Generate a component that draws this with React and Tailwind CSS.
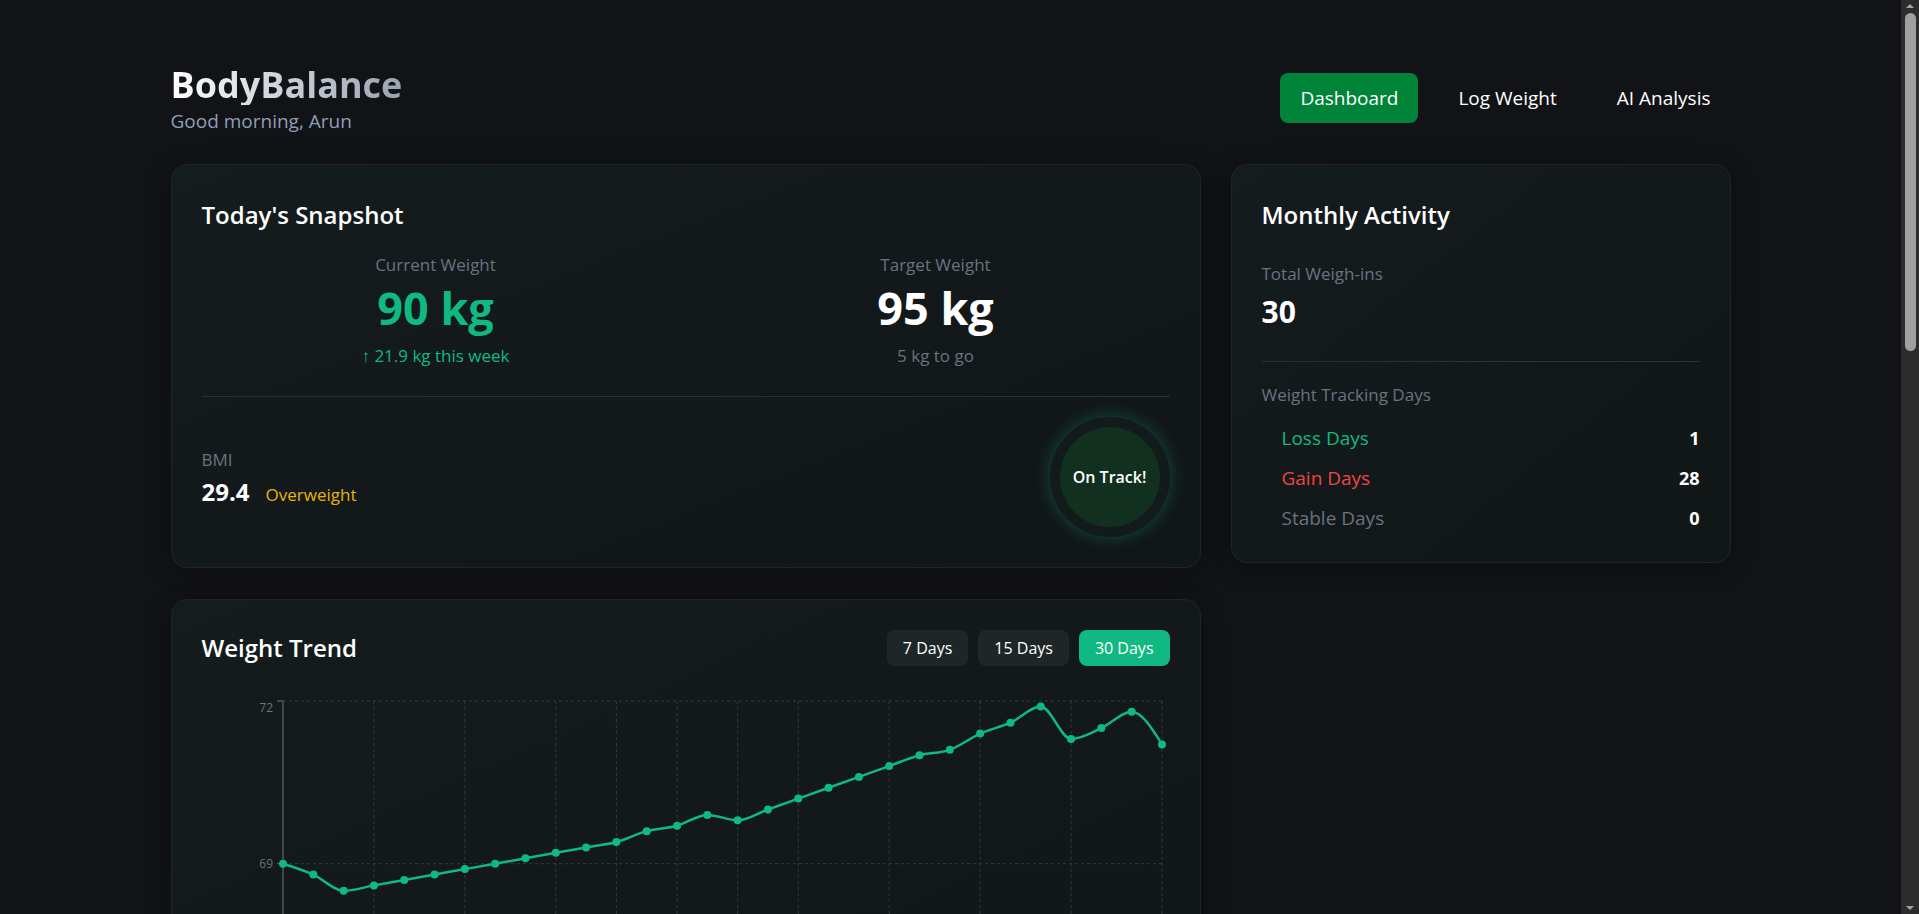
const weights = [
  69.0, 68.8, 68.5, 68.6, 68.7, 68.8, 68.9, 69.0, 69.1, 69.2,
  69.3, 69.4, 69.6, 69.7, 69.9, 69.8, 70.0, 70.2, 70.4, 70.6,
  70.8, 71.0, 71.1, 71.4, 71.6, 71.9, 71.3, 71.5, 71.8, 71.2,
];

const CHART_W = 967;
const CHART_H = 360;
const AXIS_X = 81;
const LAST_X = 960;
const TOP_Y = 15;
const PX_PER_KG = 54.23;
const gridIdx = [3, 6, 9, 11, 13, 15, 17, 20, 23, 26, 29];

const xAt = (i) => AXIS_X + (i * (LAST_X - AXIS_X)) / (weights.length - 1);
const yAt = (w) => TOP_Y + (72 - w) * PX_PER_KG;

// monotone-x curve, same idea as d3's curveMonotoneX
function monotonePath(pts) {
  const n = pts.length;
  const sign = (v) => (v < 0 ? -1 : 1);
  const t = new Array(n).fill(0);
  for (let i = 1; i < n - 1; i++) {
    const [x0, y0] = pts[i - 1];
    const [x1, y1] = pts[i];
    const [x2, y2] = pts[i + 1];
    const h0 = x1 - x0;
    const h1 = x2 - x1;
    const s0 = (y1 - y0) / h0;
    const s1 = (y2 - y1) / h1;
    const p = (s0 * h1 + s1 * h0) / (h0 + h1);
    t[i] = (sign(s0) + sign(s1)) * Math.min(Math.abs(s0), Math.abs(s1), 0.5 * Math.abs(p)) || 0;
  }
  const ends = (a, b, tt) => (3 * (b[1] - a[1]) / (b[0] - a[0]) - tt) / 2;
  t[0] = ends(pts[0], pts[1], t[1]);
  t[n - 1] = ends(pts[n - 2], pts[n - 1], t[n - 2]);

  let d = `M${pts[0][0]},${pts[0][1]}`;
  for (let i = 0; i < n - 1; i++) {
    const [x0, y0] = pts[i];
    const [x1, y1] = pts[i + 1];
    const dx = (x1 - x0) / 3;
    d += ` C${x0 + dx},${y0 + dx * t[i]} ${x1 - dx},${y1 - dx * t[i + 1]} ${x1},${y1}`;
  }
  return d;
}

function TrendChart() {
  const pts = weights.map((w, i) => [xAt(i), yAt(w)]);
  const yTicks = [72, 69, 66];
  const bottom = yAt(66);

  return (
    <svg width={CHART_W} height={CHART_H} className="block">
      {yTicks.map((v) => (
        <line key={v} x1={AXIS_X} x2={LAST_X} y1={yAt(v)} y2={yAt(v)} stroke="#343a3e" strokeDasharray="3 3" />
      ))}
      {gridIdx.map((i) => (
        <line key={i} x1={xAt(i)} x2={xAt(i)} y1={TOP_Y} y2={bottom} stroke="#343a3e" strokeDasharray="3 3" />
      ))}
      <line x1={AXIS_X} x2={AXIS_X} y1={TOP_Y} y2={bottom} stroke="#6b7280" />
      <line x1={AXIS_X} x2={LAST_X} y1={bottom} y2={bottom} stroke="#6b7280" />
      {yTicks.map((v, k) => (
        <g key={v}>
          <line x1={AXIS_X - 6} x2={AXIS_X} y1={yAt(v)} y2={yAt(v)} stroke="#6b7280" />
          {k < 2 && (
            <text
              x={AXIS_X - 10}
              y={yAt(v) + (k === 0 ? 11 : 4)}
              textAnchor="end"
              fontSize="12"
              fill="#6b7280"
            >
              {v}
            </text>
          )}
        </g>
      ))}
      <path d={monotonePath(pts)} fill="none" stroke="#10b981" strokeWidth="2.5" />
      {pts.map(([x, y], i) => (
        <circle key={i} cx={x} cy={y} r="4" fill="#10b981" />
      ))}
    </svg>
  );
}

function ScrollRail() {
  return (
    <aside className="sticky top-0 flex h-screen w-[18px] shrink-0 flex-col items-center bg-[#2c2c2c]">
      <svg width="10" height="13" viewBox="0 0 10 13" className="shrink-0">
        <path d="M1 8 L5 4 L9 8 Z" fill="#a3a3a3" />
      </svg>
      <div className="ml-[1px] h-[338px] w-[11px] rounded-full bg-[#9f9f9f]" />
      <div className="flex-1" />
      <svg width="10" height="13" viewBox="0 0 10 13" className="shrink-0">
        <path d="M1 5 L5 9 L9 5 Z" fill="#a3a3a3" />
      </svg>
    </aside>
  );
}

const card =
  'rounded-2xl border border-[#1c2527] bg-linear-to-br from-[#151c1d] to-[#111617] shadow-[0_4px_24px_rgba(0,0,0,0.3)]';

export default function App() {
  return (
    <div className="flex bg-[#121317] font-['Open_Sans',sans-serif] text-white">
      <main className="min-h-[2380px] min-w-0 flex-1">
        <div className="mx-auto max-w-[1560px]">
          <header className="mb-[29px] flex items-center justify-between pt-[62px]">
            <div>
              <h1 className="mt-[3px] w-fit bg-linear-to-r from-white to-[#9aa2b0] bg-clip-text text-4xl leading-10 font-bold text-transparent">
                BodyBalance
              </h1>
              <p className="mt-0.5 text-[19px] leading-7 text-[#8f9fb7]">Good morning, Arun</p>
            </div>
            <nav className="-mt-0.5 flex gap-5">
              <button className="rounded-lg bg-[#00843a] px-5 py-[11px] text-[19px] leading-7 text-white">Dashboard</button>
              <button className="rounded-lg px-5 py-[11px] text-[19px] leading-7 text-white">Log Weight</button>
              <button className="rounded-lg px-5 py-[11px] text-[19px] leading-7 text-white">AI Analysis</button>
            </nav>
          </header>

          <div className="grid grid-cols-[1030px_500px] items-start gap-[30px]">
            <div className="flex flex-col gap-[31px]">
              <section className={`${card} p-[30px]`}>
                <h2 className="text-2xl leading-[40px] font-semibold text-white">Today's Snapshot</h2>
                <div className="mt-[18px] grid grid-cols-2 gap-8 text-center">
                  <div>
                    <div className="text-[17px] leading-6 text-[#6b7280]">Current Weight</div>
                    <div className="mt-[7px] text-[45px] leading-[48px] font-bold text-[#10b981]">90 kg</div>
                    <div className="mt-3 text-[17px] leading-6 text-[#10b981]">↑ 21.9 kg this week</div>
                  </div>
                  <div>
                    <div className="text-[17px] leading-6 text-[#6b7280]">Target Weight</div>
                    <div className="mt-[7px] text-[45px] leading-[48px] font-bold text-white">95 kg</div>
                    <div className="mt-3 text-[17px] leading-6 text-[#6b7280]">5 kg to go</div>
                  </div>
                </div>
                <div className="mt-7 h-px bg-[#2a3133]" />
                <div className="mt-5 flex items-center justify-between">
                  <div>
                    <div className="mt-0.5 text-[17px] leading-6 text-[#6b7280]">BMI</div>
                    <div className="mt-1 flex items-baseline gap-4">
                      <span className="text-2xl leading-8 font-bold text-white">29.4</span>
                      <span className="text-[17px] text-[#eab308]">Overweight</span>
                    </div>
                  </div>
                  <div className="flex h-[120px] w-[120px] items-center justify-center rounded-full bg-[#131a1c] shadow-[0_0_16px_rgba(16,185,129,0.35)]">
                    <div className="flex h-[100px] w-[100px] items-center justify-center rounded-full bg-[#11301f]">
                      <span className="text-base font-semibold text-white">On Track!</span>
                    </div>
                  </div>
                </div>
              </section>

              <section className={`${card} p-[30px]`}>
                <div className="flex items-center justify-between">
                  <h2 className="text-2xl leading-8 font-semibold text-white">Weight Trend</h2>
                  <div className="flex gap-2.5">
                    <button className="rounded-lg bg-[#1f2627] px-4 py-1.5 text-base leading-6 text-white">7 Days</button>
                    <button className="rounded-lg bg-[#1f2627] px-4 py-1.5 text-base leading-6 text-white">15 Days</button>
                    <button className="rounded-lg bg-[#10b981] px-4 py-1.5 text-base leading-6 text-white">30 Days</button>
                  </div>
                </div>
                <div className="mt-5">
                  <TrendChart />
                </div>
              </section>
            </div>

            <section className={`${card} p-[30px]`}>
              <h2 className="text-2xl leading-[40px] font-semibold text-white">Monthly Activity</h2>
              <div className="mt-[27px] text-[17px] leading-6 text-[#6b7280]">Total Weigh-ins</div>
              <div className="mt-2 text-3xl leading-9 font-bold text-white">30</div>
              <div className="mt-[31px] h-px bg-[#2a3133]" />
              <div className="mt-[21px] text-[17px] leading-6 text-[#6b7280]">Weight Tracking Days</div>
              <div className="mt-[17px] flex flex-col gap-3 pl-5">
                <div className="flex items-center justify-between text-[19px] leading-7">
                  <span className="text-[#10b981]">Loss Days</span>
                  <span className="text-lg font-bold text-white">1</span>
                </div>
                <div className="flex items-center justify-between text-[19px] leading-7">
                  <span className="text-[#ef4444]">Gain Days</span>
                  <span className="text-lg font-bold text-white">28</span>
                </div>
                <div className="flex items-center justify-between text-[19px] leading-7">
                  <span className="text-[#6b7280]">Stable Days</span>
                  <span className="text-lg font-bold text-white">0</span>
                </div>
              </div>
            </section>
          </div>
        </div>
      </main>
      <ScrollRail />
    </div>
  );
}
